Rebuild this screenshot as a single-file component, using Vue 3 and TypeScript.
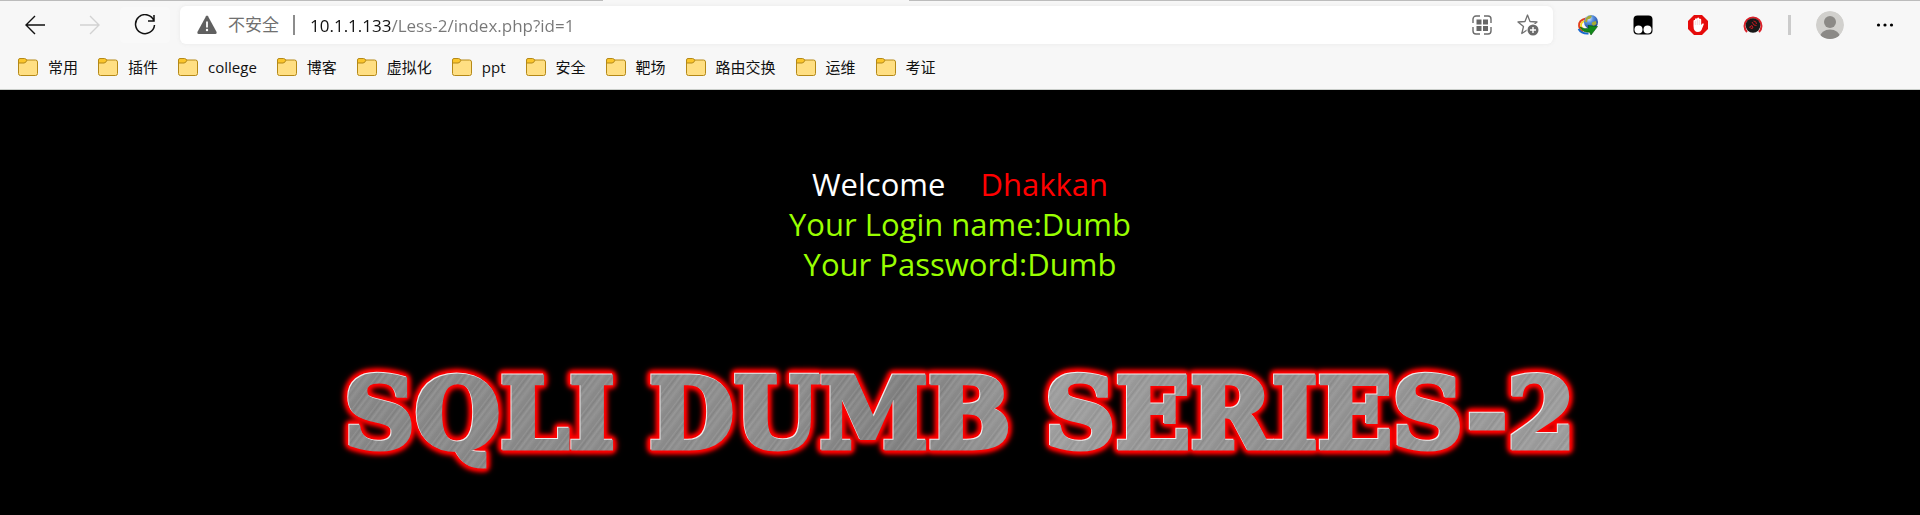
<script setup lang="ts">
import { ref } from 'vue'

const address = ref('10.1.1.133/Less-2/index.php?id=1')
const folders: string[] = ['常用', '插件', 'college', '博客', '虚拟化', 'ppt', '安全', '靶场', '路由交换', '运维', '考证']
</script>

<template>
  <div class="browser">
    <header class="chrome">
      <div class="tab-edge"><span class="edge-left"></span><span class="edge-active"></span><span class="edge-right"></span></div>
      <div class="toolbar">
        <button class="tool" type="button" aria-label="Back">
          <svg width="22" height="20" viewBox="0 0 22 20"><path d="M21 10H2M11 1 2 10l9 9" fill="none" stroke="#111" stroke-width="1.4" /></svg>
        </button>
        <button class="tool" type="button" aria-label="Forward" disabled>
          <svg width="22" height="20" viewBox="0 0 22 20"><path d="M1 10h19M11 1l9 9-9 9" fill="none" stroke="#d2d2d2" stroke-width="1.4" /></svg>
        </button>
        <button class="tool reload" type="button" aria-label="Reload">
          <svg width="22" height="22" viewBox="0 0 22 22"><path d="M20 7A9.5 9.5 0 1 0 20.500 11M20 1v6h-6" fill="none" stroke="#111" stroke-width="1.5" /></svg>
        </button>

        <div class="address">
          <svg class="warning" width="20" height="20" viewBox="0 0 20 20"><path d="M9 1.200Q10 0 11 1.200L19.600 17Q20 19 18.500 19H1.500Q0 19 .4 17Z" fill="#606060" /><path d="M10 6.500v6" stroke="#fff" stroke-width="1.800" /><circle cx="10" cy="15" r="1.200" fill="#fff" /></svg>
          <label class="security" for="url">不安全</label>
          <span class="divider"></span>
          <input id="url" v-model="address" class="url" type="text" spellcheck="false" />
          <button class="inner" type="button" aria-label="QR code">
            <svg width="20" height="20" viewBox="0 0 20 20"><path d="M1 8V4a3 3 0 0 1 3-3h4M12 1h4a3 3 0 0 1 3 3v4M19 12v4a3 3 0 0 1-3 3h-4M8 19H4a3 3 0 0 1-3-3v-4" fill="none" stroke="#6b6b6b" stroke-width="1.400" /><path d="M4.500 4.500h5v5h-5zM11 4.500h5v5h-5zM4.500 11h5v5h-5zM11 11h5v5h-5z" fill="#666" /></svg>
          </button>
          <button class="inner" type="button" aria-label="Add to favorites">
            <svg width="22" height="22" viewBox="0 0 22 22"><path d="M10.500 1 13 7.500l7 .5-5.500 4.500 1.700 7-5.700-3.700-5.700 3.700 1.700-7L1 8l7-.5Z" fill="none" stroke="#707070" stroke-width="1.300" stroke-linejoin="round" /><circle cx="16" cy="16" r="6.500" fill="#fff" /><circle cx="16" cy="16" r="5.500" fill="#6b6b6b" /><path d="M16 13v6M13 16h6" stroke="#fff" stroke-width="1.400" /></svg>
          </button>
        </div>

        <button class="tool" type="button" aria-label="Download manager">
          <svg width="22" height="22" viewBox="0 0 22 22">
            <defs><radialGradient id="globe" cx=".35" cy=".25" r=".85"><stop offset="0" stop-color="#e4eeff" /><stop offset=".35" stop-color="#5a92e2" /><stop offset="1" stop-color="#0d3186" /></radialGradient></defs>
            <path d="M9 4.500Q1.500 6 2 12q.5 4 4 5.500" fill="none" stroke="#e33d18" stroke-width="1.800" />
            <path d="M9 6.500Q3.500 8 4 12q.5 3 4 5" fill="none" stroke="#f6d51e" stroke-width="1.800" />
            <path d="M1.500 15q3 5 10 4.500" fill="none" stroke="#1769cf" stroke-width="1.800" />
            <circle cx="14" cy="8" r="7" fill="url(#globe)" />
            <path d="M9 4q2.500-3 6-2.300l-1.500 2.800-3 1-.5 3-2-1ZM15.500 8l3.500-1 .5 3-3 2-2-2Z" fill="#a5ab35" />
            <path d="M3 13q5 3 9 1l-1-2.500 9.500 1L14 21l-1.500-3Q6 19 3 13Z" fill="#128a1a" stroke="#064f0a" stroke-width=".6" />
          </svg>
        </button>
        <button class="tool" type="button" aria-label="Script manager">
          <svg width="20" height="20" viewBox="0 0 20 20"><rect x=".5" y=".5" width="19" height="19" rx="4" /><circle cx="5.500" cy="14.500" r="4" fill="#fff" /><circle cx="14.500" cy="14.500" r="4" fill="#fff" /></svg>
        </button>
        <button class="tool" type="button" aria-label="Content blocker">
          <svg width="20" height="20" viewBox="0 0 20 20"><path d="M6 0h8l6 6v8l-6 6H6l-6-6V6Z" fill="#e60b0b" /><path d="M5.500 11V6q0-1.500 1.500-1V3.800q1.500-1 2 .2 0-1.500 1.200-1.500T11.500 4q1.500-1 1.700.7V10l1.300-1.500q2-.3 1.200 1L13.500 15q-.8 2-3.500 2-4.500 0-4.500-6Z" fill="#fff" /><path d="M7.300 6v4M9.300 4.500V10M11.300 5v5" stroke="#e9a0a0" stroke-width=".4" /></svg>
        </button>
        <button class="tool" type="button" aria-label="Proxy tool">
          <svg width="20" height="20" viewBox="0 0 20 20"><path d="M4 17A8.500 8.500 0 1 1 16 17" fill="none" stroke="#db2028" stroke-width="2" /><circle cx="10" cy="10.500" r="7.300" fill="#181818" /><path d="m6.500 12 2.500-1.500 1 2.500-2 .5ZM9 7l2 3 2.500.5M10.500 6q3 0 3 3" fill="none" stroke="#c5191e" stroke-width="1" /></svg>
        </button>
        <span class="separator"></span>
        <button class="tool" type="button" aria-label="Profile">
          <svg width="28" height="28" viewBox="0 0 28 28"><defs><clipPath id="face"><circle cx="14" cy="14" r="14" /></clipPath></defs><g clip-path="url(#face)"><circle cx="14" cy="14" r="14" fill="#d1d0cd" /><circle cx="14" cy="11" r="6" fill="#8b8986" /><ellipse cx="14" cy="26" rx="10" ry="7.500" fill="#8b8986" /></g></svg>
        </button>
        <button class="tool" type="button" aria-label="Settings and more">
          <svg width="18" height="4" viewBox="0 0 18 4"><circle cx="2.500" cy="2" r="1.600" /><circle cx="9" cy="2" r="1.600" /><circle cx="15.500" cy="2" r="1.600" /></svg>
        </button>
      </div>

      <nav class="bookmarks">
        <button v-for="name in folders" :key="name" class="bookmark" type="button">
          <svg width="20" height="18" viewBox="0 0 20 18"><rect x=".5" y="2" width="19" height="15.500" rx="2" fill="#ffdf83" stroke="#b58917" /><path d="M.5 5V2Q.5.500 2 .500h4.500q1.500 0 2.300 1.800Q8 5 6 5Z" fill="#fbc62c" stroke="#b58917" /></svg>
          <span>{{ name }}</span>
        </button>
      </nav>
    </header>

    <main class="page">
      <div class="result">
        <p class="welcome">Welcome<span class="user">Dhakkan</span></p>
        <p>Your Login name:Dumb</p>
        <p>Your Password:Dumb</p>
      </div>
      <div class="glow"><h1>SQLI DUMB SERIES-2</h1></div>
    </main>
  </div>
</template>

<style>
body { margin: 0; background: #000; }
</style>

<style scoped>
.browser { min-height: 100vh; background: #000; font-family: "Open Sans", "Noto Sans CJK SC", sans-serif; }
.chrome { background: #f7f7f7; border-bottom: 1px solid #c9cdc9; }
.tab-edge { display: flex; height: 1px; }
.edge-left { flex: 603; background: #bcbcbc; }
.edge-active { flex: 306; background: #f7f7f7; }
.edge-right { flex: 1011; background: #bcbcbc; }
.toolbar { display: flex; align-items: center; gap: 5px; padding: 5px 10px 0; height: 38px; }
button { border: 0; padding: 0; margin: 0; background: none; font: inherit; color: inherit; }
.tool { display: flex; align-items: center; justify-content: center; flex: none; width: 50px; height: 36px; border-radius: 4px; }
.reload { background: #f9f9f9; }
.address { display: flex; align-items: center; flex: 1; min-width: 0; height: 38px; margin: 0 5px; padding: 0 2px 0 17px; box-sizing: border-box; border-radius: 6px; background: #fff; box-shadow: 0 0 4px #e8e8e8; }
.warning { flex: none; }
.security { margin-left: 11px; font-size: 17px; font-weight: 400; line-height: 24px; color: #707070; white-space: nowrap; }
.divider { flex: none; width: 2px; height: 20px; margin: 0 15px 0 14px; background: #8c8c8c; }
.url { flex: 1; min-width: 0; height: 30px; padding: 0; border: 0; outline: 0; font-family: "Open Sans", sans-serif; font-size: 17px; color: transparent; caret-color: #000; background: linear-gradient(90deg, #111 82px, #777 82px); background-clip: text; -webkit-background-clip: text; }
.inner { display: flex; align-items: center; justify-content: center; flex: none; width: 46px; height: 32px; }
.separator { flex: none; width: 3px; height: 20px; margin: 0 9px 0 5px; background: #cbcbcb; }
.bookmarks { display: flex; align-items: center; gap: 20px; height: 45px; padding-left: 18px; font-size: 15px; line-height: 20px; color: #111; }
.bookmark { display: flex; align-items: center; gap: 10px; white-space: nowrap; }
.page { display: flex; flex-direction: column; align-items: center; padding-top: 74px; text-align: center; }
.result { font-family: "Open Sans", sans-serif; font-size: 31px; line-height: 40px; color: #99ff00; }
.result p { margin: 0; }
.result .welcome { color: #fff; }
.user { margin-left: 35px; color: #f00; }
.glow { margin-top: 74px; filter: drop-shadow(0 0 1px #f00) drop-shadow(0 0 1px #f00) drop-shadow(0 0 2px #f00) drop-shadow(0 0 2px #f00) drop-shadow(0 0 2px #d00000); }
h1 { margin: 0; font-family: "DejaVu Serif", serif; font-size: 98px; font-weight: 700; line-height: 112px; white-space: nowrap; color: transparent; -webkit-text-stroke: 5px transparent; background: repeating-linear-gradient(127deg, #fff0 0 2px, #ffffff18 3px, #0000000c 5px, #ffffff20 8px, #fff0 10px, #ffffff18 13px, #fff0 17px), linear-gradient(100deg, #858585, #8c8c8c 35%, #7f7f7f 45%, #9c9c9c 58%, #8e8e8e 75%, #9b9b9b); background-clip: text; -webkit-background-clip: text; filter: drop-shadow(-1px -1px 0 #eee); }
</style>
